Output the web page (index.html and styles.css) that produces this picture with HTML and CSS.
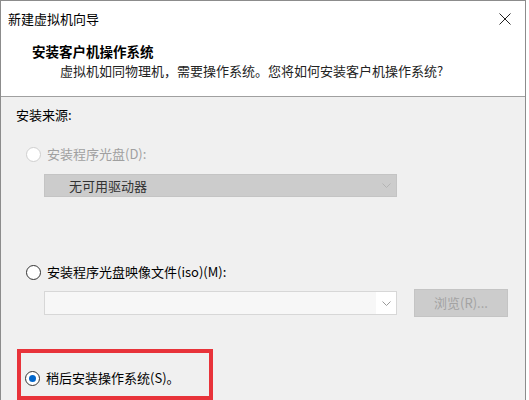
FILE: index.html
```html
<!DOCTYPE html>
<html lang="zh-CN">
<head>
    <meta charset="UTF-8">
    <meta name="viewport" content="width=device-width, initial-scale=1.0">
    <title>新建虚拟机向导</title>
    <link rel="stylesheet" href="styles.css">
</head>
<body>
    <div class="dialog">
        <div class="titlebar">
            <span class="title">新建虚拟机向导</span>
            <svg class="close" width="12" height="12" viewBox="0 0 12 12">
                <path d="M0.5 0.5 L11.5 11.5 M11.5 0.5 L0.5 11.5" stroke="#222" stroke-width="1" fill="none"/>
            </svg>
        </div>

        <div class="header">
            <div class="header-title">安装客户机操作系统</div>
            <div class="header-sub">虚拟机如同物理机，需要操作系统。您将如何安装客户机操作系统?</div>
        </div>

        <div class="body">
            <div class="group-label">安装来源:</div>

            <div class="radio-row disabled first">
                <span class="radio"></span>
                <span>安装程序光盘(D):</span>
            </div>
            <div class="select disabled">
                <span>无可用驱动器</span>
                <svg class="chevron" width="9" height="5" viewBox="0 0 9 5">
                    <path d="M0.5 0.5 L4.5 4.5 L8.5 0.5" stroke="#b4b4b4" fill="none"/>
                </svg>
            </div>

            <div class="radio-row second">
                <span class="radio"></span>
                <span>安装程序光盘映像文件(iso)(M):</span>
            </div>
            <div class="iso-row">
                <div class="combo">
                    <span class="combo-field"></span>
                    <span class="combo-btn">
                        <svg width="9" height="5" viewBox="0 0 9 5">
                            <path d="M0.5 0.5 L4.5 4.5 L8.5 0.5" stroke="#9a9a9a" fill="none"/>
                        </svg>
                    </span>
                </div>
                <div class="button disabled">浏览(R)...</div>
            </div>

            <div class="highlight">
                <div class="radio-row">
                    <span class="radio checked"></span>
                    <span>稍后安装操作系统(S)。</span>
                </div>
            </div>
        </div>
    </div>
</body>
</html>
```

FILE: styles.css
```css
body {
    margin: 0;
    background: #fff;
    font-family: "Noto Sans CJK SC", "Noto Sans", sans-serif;
    font-size: 13px;
    color: #000;
}

.dialog {
    width: 524px;
    height: 399px;
    overflow: hidden;
    border: 1px solid #8c8c8c;
    border-bottom: none;
    background: #f0f0f0;
}

.titlebar {
    height: 34px;
    background: #fff;
    display: flex;
    align-items: center;
    justify-content: space-between;
    padding: 0 14px 0 7px;
}

.title {
    line-height: 18px;
    margin-top: 1px;
}

.close {
    margin-top: 1px;
}

.header {
    height: 62px;
    background: #fff;
    border-bottom: 1px solid #a0a0a0;
    box-sizing: border-box;
    padding: 7px 0 0 31px;
}

.header-title {
    font-size: 13.5px;
    font-weight: bold;
    line-height: 18px;
}

.header-sub {
    line-height: 18px;
    margin-top: 2px;
    padding-left: 28px;
    color: #222;
}

.body {
    padding: 9px 0 0 15px;
}

.group-label {
    line-height: 18px;
}

.radio-row {
    display: flex;
    align-items: center;
    gap: 6px;
    line-height: 18px;
    margin-left: 10px;
}

.radio-row.first {
    margin-top: 21px;
}

.radio-row.second {
    margin-top: 66px;
}

.radio {
    width: 13px;
    height: 13px;
    border: 1px solid #333;
    border-radius: 50%;
    background: #fff;
    position: relative;
    flex: none;
}

.radio-row.disabled {
    color: #a0a0a0;
}

.radio-row.disabled .radio {
    border-color: #cfcfcf;
}

.radio.checked::after {
    content: "";
    position: absolute;
    left: 3px;
    top: 3px;
    width: 7px;
    height: 7px;
    border-radius: 50%;
    background: #0066cc;
}

.select {
    margin: 11px 0 0 28px;
    width: 353px;
    height: 23px;
    box-sizing: border-box;
    border: 1px solid #c4c4c4;
    background: #cccccc;
    display: flex;
    align-items: center;
    justify-content: space-between;
    padding: 0 5px 0 24px;
    color: #333;
}

.iso-row {
    display: flex;
    align-items: center;
    margin-top: 8px;
    height: 28px;
}

.combo {
    margin-left: 28px;
    width: 353px;
    height: 24px;
    box-sizing: border-box;
    border: 1px solid #d7d7d7;
    display: flex;
    background: #fff;
}

.combo-field {
    flex: 1;
    background: #f7f7f7;
}

.combo-btn {
    width: 20px;
    display: flex;
    align-items: center;
    justify-content: center;
    background: #fff;
}

.button {
    margin-left: 17px;
    width: 94px;
    height: 28px;
    box-sizing: border-box;
    border: 1px solid #c4c4c4;
    background: #cccccc;
    color: #a3a3a3;
    display: flex;
    align-items: center;
    justify-content: center;
    line-height: 18px;
}

.highlight {
    margin: 32px 0 0 1px;
    width: 196px;
    height: 51px;
    box-sizing: border-box;
    border: 4px solid #e8333a;
    padding: 16px 0 0 0;
}

.highlight .radio-row {
    margin-left: 4px;
}
```
